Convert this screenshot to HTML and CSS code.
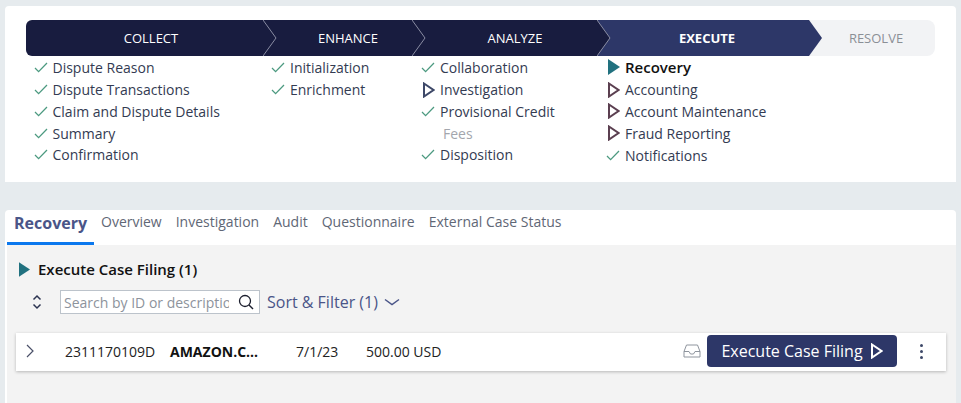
FILE: index.html
```html
<!DOCTYPE html>
<html lang="en">
<head>
    <meta charset="UTF-8">
    <title>Case Recovery</title>
    <link rel="stylesheet" href="styles.css">
</head>
<body>
    <svg class="sprites" width="0" height="0">
        <symbol id="check" viewBox="0 0 14 11"><path d="M1 6l3.600 3.600L13 1" fill="none" stroke="currentColor" stroke-width="1.300"/></symbol>
        <symbol id="play" viewBox="0 0 12 16"><path d="M1 1.500L10.500 8 1 14.500z" fill="none" stroke="currentColor" stroke-width="2"/></symbol>
        <symbol id="play-on" viewBox="0 0 12 16"><path d="M0 0l12 8-12 8z" fill="currentColor"/></symbol>
    </svg>

    <section class="card stages">
        <div class="stepper">
            <div class="step step-collect">COLLECT<svg class="tip" viewBox="0 0 14 36"><path d="M0 0l13 18L0 36z" fill="#181c3f"/><path d="M0 0l13 18L0 36" fill="none" stroke="#8a8da3"/></svg></div>
            <div class="step step-enhance">ENHANCE<svg class="tip" viewBox="0 0 14 36"><path d="M0 0l13 18L0 36z" fill="#181c3f"/><path d="M0 0l13 18L0 36" fill="none" stroke="#8a8da3"/></svg></div>
            <div class="step step-analyze">ANALYZE<svg class="tip" viewBox="0 0 14 36"><path d="M0 0l13 18L0 36z" fill="#181c3f"/><path d="M0 0l13 18L0 36" fill="none" stroke="#8a8da3"/></svg></div>
            <div class="step step-execute">EXECUTE<svg class="tip" viewBox="0 0 14 36"><path d="M0 0l13 18L0 36z" fill="#2d3768"/></svg></div>
            <div class="step step-resolve">RESOLVE</div>
        </div>
        <div class="tasks">
            <ul class="task-list">
                <li><svg class="ico-check"><use href="#check"/></svg>Dispute Reason</li>
                <li><svg class="ico-check"><use href="#check"/></svg>Dispute Transactions</li>
                <li><svg class="ico-check"><use href="#check"/></svg>Claim and Dispute Details</li>
                <li><svg class="ico-check"><use href="#check"/></svg>Summary</li>
                <li><svg class="ico-check"><use href="#check"/></svg>Confirmation</li>
            </ul>
            <ul class="task-list">
                <li><svg class="ico-check"><use href="#check"/></svg>Initialization</li>
                <li><svg class="ico-check"><use href="#check"/></svg>Enrichment</li>
            </ul>
            <ul class="task-list">
                <li><svg class="ico-check"><use href="#check"/></svg>Collaboration</li>
                <li><svg class="ico-play blue"><use href="#play"/></svg>Investigation</li>
                <li><svg class="ico-check"><use href="#check"/></svg>Provisional Credit</li>
                <li class="muted">Fees</li>
                <li><svg class="ico-check"><use href="#check"/></svg>Disposition</li>
            </ul>
            <ul class="task-list last">
                <li class="current"><svg class="ico-play teal"><use href="#play-on"/></svg>Recovery</li>
                <li><svg class="ico-play maroon"><use href="#play"/></svg>Accounting</li>
                <li><svg class="ico-play maroon"><use href="#play"/></svg>Account Maintenance</li>
                <li><svg class="ico-play maroon"><use href="#play"/></svg>Fraud Reporting</li>
                <li><svg class="ico-check"><use href="#check"/></svg>Notifications</li>
            </ul>
        </div>
    </section>

    <section class="card detail">
        <nav class="tabs">
            <a href="#" class="tab tab-current">Recovery</a>
            <a href="#" class="tab">Overview</a>
            <a href="#" class="tab">Investigation</a>
            <a href="#" class="tab">Audit</a>
            <a href="#" class="tab">Questionnaire</a>
            <a href="#" class="tab">External Case Status</a>
        </nav>
        <div class="panel">
            <h2 class="panel-title"><svg class="ico-play teal"><use href="#play-on"/></svg>Execute Case Filing (1)</h2>
            <div class="toolbar">
                <svg class="ico-sort" viewBox="0 0 10 16"><path d="M1.500 5.500L5 2l3.500 3.500M1.500 10.500L5 14l3.500-3.500" fill="none" stroke="#2b3350" stroke-width="1.500"/></svg>
                <div class="search">
                    <input type="text" placeholder="Search by ID or description">
                    <svg class="ico-search" viewBox="0 0 16 16"><circle cx="7" cy="7" r="5.500" fill="none" stroke="#1c1f2e" stroke-width="1.300"/><path d="M11 11l4 4" stroke="#1c1f2e" stroke-width="1.500"/></svg>
                </div>
                <a href="#" class="filter">Sort &amp; Filter (1)<svg class="ico-down" viewBox="0 0 16 8"><path d="M1 1.500l7 5 7-5" fill="none" stroke="#4a5588" stroke-width="1.500"/></svg></a>
            </div>
            <div class="case-row">
                <svg class="ico-expand" viewBox="0 0 8 14"><path d="M1 1l6 6-6 6" fill="none" stroke="#4a5068" stroke-width="1.200"/></svg>
                <span class="cell cell-id">2311170109D</span>
                <span class="cell cell-name">AMAZON.C...</span>
                <span class="cell cell-date">7/1/23</span>
                <span class="cell cell-amount">500.00 USD</span>
                <svg class="ico-inbox" viewBox="0 0 18 14"><path d="M3.500 1h11L17 7.500V13H1V7.500zM1 7.500h5l1.500 2.500h3L12 7.500h5" fill="none" stroke="#8f959e"/></svg>
                <button class="btn-primary">Execute Case Filing<svg class="ico-btn" viewBox="0 0 12 16"><path d="M1 1.500L10.500 8 1 14.500z" fill="none" stroke="#fff" stroke-width="2"/></svg></button>
                <span class="more"><i></i><i></i><i></i></span>
            </div>
        </div>
    </section>
</body>
</html>
```

FILE: styles.css
```css
* {
    box-sizing: border-box;
}
html, body {
    height: 403px;
    margin: 0;
    overflow: hidden;
}
body {
    display: flex;
    flex-direction: column;
    gap: 28px;
    padding: 6px 5px 0;
    background: #e6ebee;
    font-family: "Open Sans", "Liberation Sans", sans-serif;
    font-size: 14px;
    color: #333b52;
}
.sprites {
    position: absolute;
}
.card {
    background: #fff;
    border-radius: 4px 4px 0 0;
}

/* stage bar */
.stages {
    height: 176px;
    padding: 14px 21px 0;
}
.stepper {
    display: flex;
    height: 36px;
    border-radius: 8px;
    background: #f2f3f5;
    font-size: 13px;
    line-height: 36px;
    text-align: center;
    color: #fff;
}
.step {
    position: relative;
    background: #181c3f;
}
.step-collect {
    width: 237px;
    padding-left: 13px;
    border-radius: 6px 0 0 6px;
}
.step-enhance {
    width: 149px;
    padding-left: 21px;
}
.step-analyze {
    width: 185px;
    padding-left: 21px;
}
.step-execute {
    width: 212px;
    padding-left: 8px;
    background: #2d3768;
    font-weight: 700;
}
.step-resolve {
    width: 126px;
    padding-left: 8px;
    background: none;
    color: #8b8f96;
}
.tip {
    position: absolute;
    top: 0;
    left: 100%;
    z-index: 1;
    width: 14px;
    height: 36px;
}

/* task lists under the stages */
.tasks {
    display: grid;
    grid-template-columns: 237px 150px 185px 1fr;
    padding: 1px 0 0 8px;
}
.task-list {
    margin: 0;
    padding: 0;
    list-style: none;
}
.task-list li {
    display: flex;
    align-items: center;
    height: 21.8px;
    padding-left: 19px;
    position: relative;
}
.task-list:first-child li {
    padding-left: 18.5px;
}
.task-list:not(.last) li:nth-child(5) {
    margin-top: -1px;
}
.task-list li.muted {
    padding-left: 22px;
    color: #a3a6ad;
}
.task-list li.current {
    padding-bottom: 2px;
    font-size: 15px;
    font-weight: 600;
    color: #111;
}
.task-list svg {
    flex: none;
    position: absolute;
}
.ico-check {
    left: 0;
    width: 14px;
    height: 11px;
    color: #4c9a80;
}
.ico-play {
    width: 12px;
    height: 16px;
}
.task-list .ico-play {
    left: 2px;
}
.blue {
    color: #3d4868;
}
.maroon {
    color: #5b3f50;
}
.teal {
    color: #21717f;
}

/* tabs */
.detail {
    flex: 1;
    display: flex;
    flex-direction: column;
    min-height: 0;
}
.tabs {
    display: flex;
    height: 35px;
    padding-left: 2px;
    color: #5b6474;
}
.tab {
    padding: 2px 7px 0;
    line-height: 19px;
    color: #5f6776;
    text-decoration: none;
}
.tab-current {
    width: 87px;
    margin-right: 0;
    padding: 2px 0 0 7px;
    border-bottom: 3px solid #0b78ee;
    font-size: 16px;
    font-weight: 700;
    line-height: 22px;
    color: #4a5588;
}

/* panel */
.panel {
    flex: 1;
    margin-left: 2px;
    padding: 14px 10px 0 9px;
    background: #f3f3f3;
}
.panel-title {
    display: flex;
    align-items: center;
    gap: 8px;
    height: 20px;
    margin: 0 0 0 3px;
    font-size: 15px;
    font-weight: 600;
    color: #111;
}
.panel-title .ico-play {
    width: 11px;
    height: 15px;
}
.toolbar {
    display: flex;
    align-items: center;
    height: 24px;
    margin: 11px 0 19px;
    padding-left: 16px;
}
.ico-sort {
    width: 10px;
    height: 16px;
    margin-right: 18px;
}
.search {
    display: flex;
    align-items: center;
    width: 200px;
    height: 24px;
    padding: 0 5px 0 3px;
    border: 1px solid #bcc3cb;
    background: #fff;
}
.search input {
    flex: 1;
    min-width: 0;
    border: 0;
    padding: 0;
    outline: 0;
    font: inherit;
    color: #333;
}
.search input::placeholder {
    color: #8d939c;
    opacity: 1;
}
.ico-search {
    flex: none;
    width: 16px;
    height: 16px;
    margin-left: 9px;
}
.filter {
    display: flex;
    align-items: center;
    gap: 6px;
    margin-left: 7px;
    font-size: 16px;
    color: #4a5588;
    text-decoration: none;
}
.ico-down {
    width: 16px;
    height: 8px;
}

/* case row */
.case-row {
    display: flex;
    align-items: center;
    height: 38px;
    padding-bottom: 2px;
    background: #fff;
    box-shadow: 0 1px 3px rgba(0, 0, 0, .25);
}
.ico-expand {
    flex: none;
    width: 8px;
    height: 14px;
    margin: 0 31px 0 10px;
}
.cell {
    color: #222;
}
.cell-id {
    width: 105px;
}
.cell-name {
    width: 126px;
    font-weight: 700;
    color: #111;
}
.cell-date {
    width: 70px;
}
.cell-amount {
    flex: 1;
}
.ico-inbox {
    flex: none;
    width: 18px;
    height: 14px;
    margin-right: 6px;
}
.btn-primary {
    display: flex;
    align-items: center;
    justify-content: center;
    gap: 8px;
    width: 190px;
    height: 32px;
    border: 0;
    border-radius: 4px;
    background: #2d3768;
    font: inherit;
    font-size: 16px;
    color: #fff;
}
.ico-btn {
    width: 12px;
    height: 16px;
}
.more {
    display: flex;
    flex-direction: column;
    gap: 3px;
    margin: 0 23px;
}
.more i {
    width: 3px;
    height: 3px;
    border-radius: 50%;
    background: #3d4868;
}
```
